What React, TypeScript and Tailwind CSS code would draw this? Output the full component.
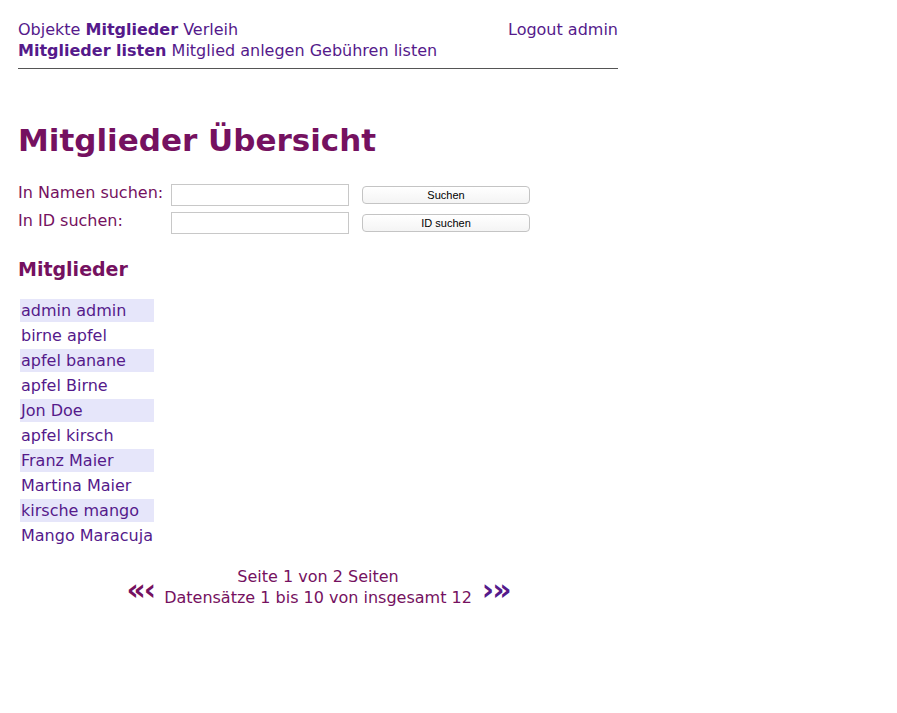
import React from 'react';

const members = [
  'admin admin',
  'birne apfel',
  'apfel banane',
  'apfel Birne',
  'Jon Doe',
  'apfel kirsch',
  'Franz Maier',
  'Martina Maier',
  'kirsche mango',
  'Mango Maracuja',
];

function SearchRow({ label, button }: { label: string; button: string }) {
  return (
    <div className="flex items-start h-[28px]">
      <span className="w-[153px] text-[16px] leading-[17px] text-[#751160]">{label}</span>
      <input
        type="text"
        className="w-[178px] h-[22px] border border-[#c8c8c8] bg-white outline-none"
      />
      <button
        type="button"
        className="ml-[13px] mt-[2px] w-[168px] h-[18px] rounded-[4px] border border-[#c4c4c4] bg-gradient-to-b from-white to-[#f4f4f4] text-[11px] leading-[16px] text-black font-['Liberation_Sans',Arial,sans-serif]"
      >
        {button}
      </button>
    </div>
  );
}

export default function App() {
  return (
    <div className="min-h-[713px] bg-white pl-[18px] pt-[19px] font-['DejaVu_Sans',Verdana,sans-serif] text-[16px]">
      <div className="w-[600px]">
        {/* top navigation */}
        <div className="text-[#551a8b] leading-[21px]">
          <div className="flex justify-between">
            <div>
              Objekte <span className="font-bold">Mitglieder</span> Verleih
            </div>
            <div>Logout admin</div>
          </div>
          <div>
            <span className="font-bold">Mitglieder listen</span> Mitglied anlegen Gebühren listen
          </div>
        </div>
        <div className="mt-[7px] h-px bg-[#555]" />

        <h1 className="mt-[51px] text-[31px] leading-[40px] font-bold text-[#751160]">
          Mitglieder Übersicht
        </h1>

        <div className="mt-[24px]">
          <SearchRow label="In Namen suchen:" button="Suchen" />
          <SearchRow label="In ID suchen:" button="ID suchen" />
        </div>

        <h3 className="mt-[17px] text-[19px] leading-[24px] font-bold text-[#751160]">Mitglieder</h3>

        <div className="mt-[18px] ml-[2px] flex flex-col gap-[2px]">
          {members.map((m, i) => (
            <div
              key={m}
              className={`w-[134px] h-[23px] pl-[1px] leading-[23px] text-[#551a8b] whitespace-nowrap ${
                i % 2 === 0 ? 'bg-[#e6e6fa]' : ''
              }`}
            >
              {m}
            </div>
          ))}
        </div>

        <div className="mt-[19px] flex items-center justify-center">
          <span className="mt-[6px] text-[30px] font-bold leading-none text-[#751160] tracking-[-2px]">«‹</span>
          <div className="mx-[10px] text-center leading-[21px] text-[#751160]">
            <div>Seite 1 von 2 Seiten</div>
            <div>Datensätze 1 bis 10 von insgesamt 12</div>
          </div>
          <span className="mt-[6px] text-[30px] font-bold leading-none text-[#551a8b] tracking-[-2px]">›»</span>
        </div>
      </div>
    </div>
  );
}
